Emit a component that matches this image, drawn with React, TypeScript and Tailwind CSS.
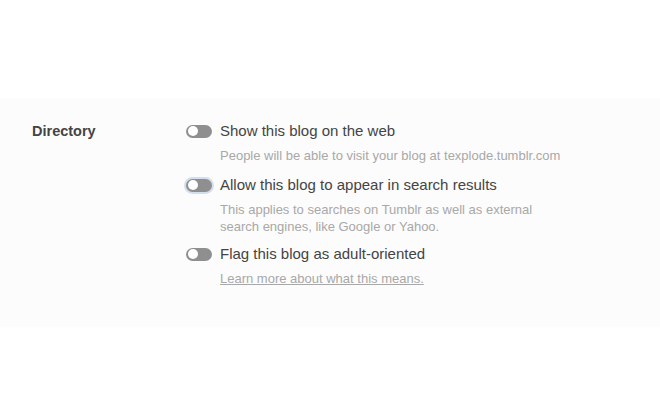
import React from 'react';

const settings = [
  {
    label: 'Show this blog on the web',
    note: ['People will be able to visit your blog at texplode.tumblr.com'],
    link: false,
    gap: '',
    focus: false,
  },
  {
    label: 'Allow this blog to appear in search results',
    note: ['This applies to searches on Tumblr as well as external', 'search engines, like Google or Yahoo.'],
    link: false,
    gap: 'mt-[11px]',
    focus: true,
  },
  {
    label: 'Flag this blog as adult-oriented',
    note: ['Learn more about what this means.'],
    link: true,
    gap: 'mt-[9px]',
    focus: false,
  },
];

const Toggle = ({ focus }: { focus: boolean }) => (
  <span
    className={
      focus
        ? 'relative inline-block w-[26px] h-[13px] rounded-full bg-[#8f8f8f] shrink-0 ring-2 ring-[#d3deee]'
        : 'relative inline-block w-[26px] h-[13px] rounded-full bg-[#8f8f8f] shrink-0'
    }
  >
    <span className="absolute left-[2px] top-[1.5px] w-[10px] h-[10px] rounded-full bg-white" />
  </span>
);

const App = () => {
  return (
    <div className="w-[660px] h-[420px] bg-white pt-[98px]" style={{ fontFamily: '"Liberation Sans", Arial, sans-serif' }}>
      <div className="bg-[#fcfcfc] flex pt-[23px] h-[229px]">
        <div className="w-[186px] pl-[32px] text-[14.5px] font-bold text-[#444] leading-[20px]">Directory</div>
        <div className="flex flex-col">
          {settings.map((s, i) => (
            <div key={i} className={s.gap}>
              <div className="flex items-center gap-[8px] h-[20px]">
                <Toggle focus={s.focus} />
                <span className="text-[15px] text-[#444]">{s.label}</span>
              </div>
              <div className="pl-[34px] mt-[6px] text-[13px] leading-[17px] text-[#a8a8a8]">
                {s.link ? (
                  <a className="underline">{s.note[0]}</a>
                ) : (
                  s.note.map((n, j) => <div key={j}>{n}</div>)
                )}
              </div>
            </div>
          ))}
        </div>
      </div>
    </div>
  );
};

export default App;
